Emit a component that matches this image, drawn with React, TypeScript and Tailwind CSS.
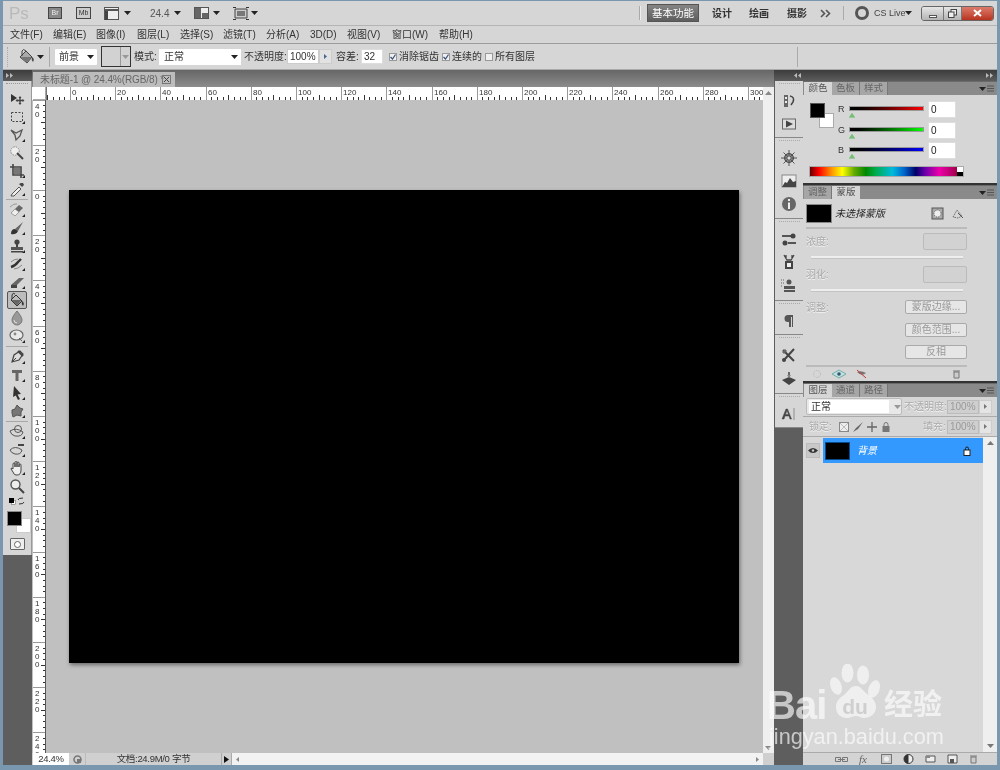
import React from "react";

const FONT = "font-['Liberation_Sans','Noto_Sans_CJK_SC',sans-serif]";

function Ic({ w = 16, h = 16, children }: { w?: number; h?: number; children: React.ReactNode }) {
  return (
    <svg width={w} height={h} viewBox={`0 0 ${w} ${h}`} className="block shrink-0">
      {children}
    </svg>
  );
}

function Caret({ c = "#222" }: { c?: string }) {
  return (
    <svg width="7" height="4" viewBox="0 0 7 4" className="block shrink-0">
      <path d="M0 0h7L3.5 4z" fill={c} />
    </svg>
  );
}

const corner = <path d="M13 15h3v-3z" fill="#222" />;

const tools: React.ReactNode[][] = [
  [
    <Ic key="a"><path d="M2 3l6 4-6 4z" fill="#333" /><path d="M11 6v7M7.5 9.5h7" stroke="#444" strokeWidth="1.4" /><path d="M11 5l-1.5 2h3zM11 14l-1.5-2h3zM6.5 9.5l2-1.5v3zM15.5 9.5l-2-1.5v3z" fill="#444" /></Ic>,
    <Ic key="b"><rect x="2.5" y="3.5" width="11" height="9" fill="none" stroke="#444" strokeDasharray="2 1.5" />{corner}</Ic>,
    <Ic key="c"><path d="M2 3l5 3 6-3-2 6-4 4-1-5z" fill="none" stroke="#555" strokeWidth="1.3" />{corner}</Ic>,
    <Ic key="d"><circle cx="6" cy="6" r="4.2" fill="#eee" stroke="#888" strokeDasharray="1.5 1" /><path d="M8 8l6 6" stroke="#444" strokeWidth="2" /></Ic>,
    <Ic key="e"><path d="M4 1v11h11M1 4h11v11" fill="none" stroke="#444" strokeWidth="1.6" /><rect x="5" y="5" width="6" height="6" fill="#777" />{corner}</Ic>,
    <Ic key="f"><path d="M3 13l7-7 2 2-7 7-3 0z" fill="#eee" stroke="#555" /><path d="M10 3l3 3 2-2-1-2-2 0z" fill="#444" />{corner}</Ic>,
  ],
  [
    <Ic key="a"><path d="M2 11l8-8 4 3-8 8z" fill="#666" /><path d="M2 11l4-4 4 3-4 4z" fill="#eee" stroke="#777" strokeWidth=".5" /><path d="M1 5q4-4 7-3" stroke="#999" fill="none" />{corner}</Ic>,
    <Ic key="b"><path d="M6 9l8-7-5 9z" fill="#666" /><path d="M2 14q0-5 4-5l3 2q-2 4-7 3z" fill="#333" />{corner}</Ic>,
    <Ic key="c"><circle cx="8" cy="4" r="2.6" fill="#444" /><path d="M7 6h2v3H7z" fill="#444" /><path d="M2 9h12v3H2z" fill="#555" /><path d="M2 13h12v1.5H2z" fill="#444" />{corner}</Ic>,
    <Ic key="d"><path d="M2 11q4-1 7-5l3-3" stroke="#333" strokeWidth="2.4" fill="none" /><path d="M2 6q3-3 7-3M5 13q4 0 8-4" stroke="#888" fill="none" />{corner}</Ic>,
    <Ic key="e"><path d="M2 11l8-7h5l-7 7z" fill="#666" /><path d="M2 11h6v3H2z" fill="#444" />{corner}</Ic>,
    <Ic key="f"><path d="M2 8l5-5 6 6-5 5z" fill="#bbb" stroke="#333" /><path d="M6 2q-2-2-3 1v4" stroke="#333" fill="none" /><path d="M13 9q3 2 1 5-2-2-1-5z" fill="#333" /><path d="M2.500 8h10l-4.500 5.500z" fill="#666" /></Ic>,
    <Ic key="g"><path d="M8 1q5 6 5 9a5 5 0 01-10 0q0-3 5-9z" fill="#999" stroke="#777" /><path d="M5 10q0 3 3 3" stroke="#ddd" fill="none" /></Ic>,
    <Ic key="h"><ellipse cx="7.5" cy="7" rx="6.5" ry="5" fill="#e8e8e8" stroke="#666" strokeWidth="1.2" /><circle cx="6" cy="6" r="1.4" fill="#888" /><path d="M10 10l3 3" stroke="#666" />{corner}</Ic>,
  ],
  [
    <Ic key="a"><path d="M3 13l2-7 6-4 3 3-4 6z" fill="#ddd" stroke="#444" strokeWidth="1.2" /><path d="M3 13l4-4" stroke="#444" /><path d="M9 2l5 5" stroke="#444" strokeWidth="2" />{corner}</Ic>,
    <Ic key="b"><path d="M3 3h10v3H9.500v8h-3V6H3z" fill="#666" />{corner}</Ic>,
    <Ic key="c"><path d="M5 1l7 8-3.500.5L11 14l-2 1-2.200-4.500L4 12z" fill="#333" />{corner}</Ic>,
    <Ic key="d"><path d="M3 7l3-1 2-4 3 3 3 1-2 3 0 4-4-1-4 2-1-4z" fill="#777" stroke="#555" />{corner}</Ic>,
  ],
  [
    <Ic key="a"><circle cx="9" cy="5" r="3.500" fill="#ddd" stroke="#555" /><path d="M1 7q6-4 13 1-1 5-8 4-4-1-5-5z" fill="none" stroke="#555" />{corner}</Ic>,
    <Ic key="b"><path d="M1 8q5-5 12 0-1 5-7 4-4-1-5-4z" fill="none" stroke="#555" /><path d="M9 3h6" stroke="#444" strokeWidth="2" />{corner}</Ic>,
    <Ic key="c"><path d="M4 9V4a1 1 0 012 0v3V2.500a1 1 0 012 0V7V3a1 1 0 012 0v4V5a1 1 0 012 0v5q0 5-4 5H7q-2 0-3-3L2 9q0-2 2 0z" fill="#eee" stroke="#444" />{corner}</Ic>,
    <Ic key="d"><circle cx="6.500" cy="6.500" r="4.500" fill="#eee" stroke="#555" strokeWidth="1.400" /><path d="M10 10l5 5" stroke="#444" strokeWidth="2" /></Ic>,
  ],
];

function ToolBox() {
  return (
    <div className="bg-[#d6d6d6] flex flex-col items-center border-r border-[#999] pb-[5px]">
      <div className="h-[9px] w-full flex justify-center pt-[2px]">
        <div className="w-[22px] h-[3px] border-t border-dotted border-[#999]" />
      </div>
      {tools.map((g, i) => (
        <React.Fragment key={i}>
          {i > 0 && (
            <div className="h-[3px] w-full flex items-center justify-center">
              <div className="w-[22px] h-px bg-[#a8a8a8]" />
            </div>
          )}
          {g.map((t, j) => (
            <div
              key={j}
              className={
                i === 1 && j === 5
                  ? "h-[18px] w-[20px] flex items-center justify-center rounded-[2px] border border-[#555] bg-[#bdbdbd]"
                  : "h-[18px] w-[20px] flex items-center justify-center"
              }
            >
              {t}
            </div>
          ))}
        </React.Fragment>
      ))}
      <div className="h-[12px] w-full flex items-center justify-between px-[6px]">
        <Ic w={7} h={7}><rect x="2.500" y="2.500" width="4" height="4" fill="#fff" stroke="#555" strokeWidth=".5" /><rect x="0" y="0" width="5" height="5" fill="#000" /></Ic>
        <Ic w={8} h={8}><path d="M1 3q0-2 5-2M7 5q0 2-5 2" stroke="#333" fill="none" /></Ic>
      </div>
      <div className="relative w-[24px] h-[27px] mt-[4px]">
        <div className="absolute left-[11px] top-[7px] w-[15px] h-[15px] bg-white border border-[#ccc]" />
        <div className="absolute left-[2px] top-0 w-[15px] h-[15px] bg-black border border-[#888]" />
      </div>
      <div className="w-[15px] h-[12px] bg-[#eee] border border-[#666] rounded-[1px] flex items-center justify-center">
        <div className="w-[7px] h-[7px] rounded-full border border-[#666] bg-white" />
      </div>
    </div>
  );
}

function HRuler() {
  const majors = Array.from({ length: 16 }, (_, i) => i);
  const ticks: React.ReactNode[] = [];
  for (let k = -5; k < 130; k++) {
    const x = 24 + k * 5.65;
    if (x < 0 || x > 717) continue;
    const mid = ((k % 8) + 8) % 8 === 4;
    ticks.push(<path key={k} d={`M${Math.round(x) + 0.5} ${mid ? 8 : 10}V13`} stroke="#333" strokeWidth="1" />);
  }
  return (
    <svg width="717" height="13" className="block shrink-0">
      <rect width="717" height="13" fill="#fff" />
      {ticks}
      {majors.map((i) => {
        const x = Math.round(24 + i * 45.2) + 0.5;
        return (
          <g key={i}>
            <path d={`M${x} 0V13`} stroke="#999" />
            <text x={x + 1.5} y="8" fontSize="8" fill="#333" fontFamily="Liberation Sans">{i * 20}</text>
          </g>
        );
      })}
      <path d="M0.500 0V13" stroke="#777" />
    </svg>
  );
}

function VRuler() {
  const labels = ["40", "20", "0", "20", "40", "60", "80", "100", "120", "140", "160", "180", "200", "220", "240"];
  const ticks: React.ReactNode[] = [];
  for (let k = -16; k < 100; k++) {
    const y = 90 + k * 5.65;
    if (y < 0 || y > 653) continue;
    const mid = ((k % 8) + 8) % 8 === 4;
    ticks.push(<path key={k} d={`M${mid ? 8 : 10} ${Math.round(y) + 0.5}H13`} stroke="#333" />);
  }
  return (
    <svg width="13" height="653" className="block shrink-0">
      <rect width="13" height="653" fill="#fff" />
      {ticks}
      {labels.map((l, i) => {
        const y = Math.round(90 + (i - 2) * 45.2);
        return (
          <g key={i}>
            <path d={`M0 ${y + 0.5}H13`} stroke="#999" />
            {l.split("").map((c, j) => (
              <text key={j} x="2" y={y + 9 + j * 8} fontSize="8" fill="#333" fontFamily="Liberation Sans">{c}</text>
            ))}
          </g>
        );
      })}
      <path d="M12.500 0V653" stroke="#555" />
    </svg>
  );
}

function Tabs({ items, active = 0 }: { items: string[]; active?: number }) {
  return (
    <div className="h-[14px] bg-[#8a8a8a] flex items-stretch border-t border-[#6a6a6a] relative shrink-0">
      <div className="w-px" />
      {items.map((t, i) => (
        <div
          key={t}
          className={
            i === active
              ? "w-[28px] flex items-center justify-center text-[9.500px] text-[#555] bg-[#d6d6d6]"
              : "w-[28px] flex items-center justify-center text-[9.500px] text-[#666] bg-[#a6a6a6] border-r border-[#777]"
          }
        >
          {t}
        </div>
      ))}
      <div className="ml-auto mr-[3px] flex items-center gap-px">
        <Caret c="#222" />
        <Ic w={7} h={7}><path d="M0 1h7M0 3.500h7M0 6h7" stroke="#555" /></Ic>
      </div>
    </div>
  );
}

function ColorRow({ l, g }: { l: string; g: string }) {
  return (
    <div className="h-[20.500px] flex items-start">
      <span className="w-[11px] text-[9px] leading-[16px] text-[#333]">{l}</span>
      <div className="w-[75px] mt-[5px] relative h-[12px]">
        <div className={`h-[5px] border border-[#999] ${g}`} />
        <div className="absolute left-[-1px] top-[6px]">
          <Ic w={8} h={6}><path d="M4 0l4 6H0z" fill="#7dbb7d" stroke="#eee" strokeWidth=".5" /></Ic>
        </div>
      </div>
      <div className="ml-[4px] w-[28px] h-[17px] bg-white border border-[#ddd] text-[10px] leading-[15px] pl-[2px] text-[#222]">0</div>
    </div>
  );
}

function MiniBtn({ label }: { label: string }) {
  return (
    <div className="w-[62px] h-[14px] rounded-[2px] border border-[#aaa] bg-[#e6e6e6] text-[10px] leading-[12px] text-center text-[#999]">
      {label}
    </div>
  );
}

function ColorPanel() {
  return (
    <div className="h-[102px] shrink-0 flex flex-col">
      <Tabs items={["颜色", "色板", "样式"]} />
      <div className="flex-1 bg-[#d6d6d6] pt-[6px] pl-[6px] flex flex-col">
        <div className="flex h-[65px]">
          <div className="relative w-[29px] h-[28px] mt-[2px]">
            <div className="absolute left-[10px] top-[10px] w-[15px] h-[15px] bg-white border border-[#aaa]" />
            <div className="absolute left-px top-0 w-[15px] h-[15px] bg-black border border-[#555]" />
          </div>
          <div className="flex flex-col">
            <ColorRow l="R" g="bg-gradient-to-r from-black to-[#ff0000]" />
            <ColorRow l="G" g="bg-gradient-to-r from-black to-[#00ff00]" />
            <ColorRow l="B" g="bg-gradient-to-r from-black to-[#0000ff]" />
          </div>
        </div>
        <div className="w-[155px] h-[11px] flex border border-[#aaa]">
          <div className="flex-1 bg-[linear-gradient(90deg,#600,#f00_6%,#f90_15%,#ff0_22%,#6a0_30%,#080_38%,#0a4_44%,#0bd_56%,#06c_64%,#006_72%,#60a_78%,#e0a_88%,#a0004a)]" />
          <div className="w-[6px] flex flex-col">
            <div className="flex-1 bg-white" />
            <div className="flex-1 bg-black" />
          </div>
        </div>
      </div>
    </div>
  );
}

const dis = "text-[10px] text-[#aaa] [text-shadow:0_1px_0_#f4f4f4]";

function MaskPanel() {
  return (
    <div className="h-[198px] shrink-0 flex flex-col border-t-[2px] border-[#333]">
      <Tabs items={["调整", "蒙版"]} active={1} />
      <div className="flex-1 bg-[#d6d6d6] px-[3px] flex flex-col">
        <div className="h-[30px] flex items-center border-b-[2px] border-[#bbb] mr-[27px]">
          <div className="w-[26px] h-[19px] bg-black border border-[#888]" />
          <span className="ml-[3px] text-[10px] italic text-[#222]">未选择蒙版</span>
          <div className="ml-auto mr-[7px]">
            <Ic w={13} h={13}><rect x="1" y="1" width="11" height="11" fill="#aaa" stroke="#555" /><circle cx="6.500" cy="6.500" r="3.500" fill="#eee" stroke="#555" strokeDasharray="1 1" /></Ic>
          </div>
          <div className="mr-[3px]">
            <Ic w={13} h={13}><path d="M2 10l4-7 5 6-4 2z" fill="none" stroke="#666" strokeDasharray="1.500 1" /><path d="M7 6l5 5" stroke="#555" /></Ic>
          </div>
        </div>
        <div className={`mt-[3px] h-[18px] flex items-center justify-between mr-[27px] ${dis}`}>
          <span>浓度:</span>
          <div className="w-[44px] h-[17px] border border-[#bbb] rounded-[2px] bg-[#d2d2d2]" />
        </div>
        <div className="mt-[6px] ml-[5px] w-[152px] h-[3px] bg-[#eee] border-b border-[#c4c4c4]" />
        <div className={`mt-[6px] h-[18px] flex items-center justify-between mr-[27px] ${dis}`}>
          <span>羽化:</span>
          <div className="w-[44px] h-[17px] border border-[#bbb] rounded-[2px] bg-[#d2d2d2]" />
        </div>
        <div className="mt-[6px] ml-[5px] w-[152px] h-[3px] bg-[#eee] border-b border-[#c4c4c4]" />
        <div className="mt-[8px] flex justify-between mr-[27px]">
          <span className={dis}>调整:</span>
          <MiniBtn label="蒙版边缘..." />
        </div>
        <div className="mt-[8px] flex justify-end mr-[27px]"><MiniBtn label="颜色范围..." /></div>
        <div className="mt-[8px] flex justify-end mr-[27px]"><MiniBtn label="反相" /></div>
        <div className="mt-[6px] mr-[27px] h-[2px] bg-[#bbb]" />
        <div className="h-[12px] mt-[1px] flex items-center mr-[33px] pl-[6px] gap-[10px]">
          <Ic w={10} h={10}><circle cx="5" cy="5" r="3.500" fill="none" stroke="#bbb" strokeDasharray="1.500 1" /></Ic>
          <Ic w={14} h={10}><path d="M0 5l7-4 7 4-7 4z" fill="#bfe3dc" stroke="#7aa" /><circle cx="7" cy="5" r="1.800" fill="#357" /></Ic>
          <Ic w={11} h={10}><path d="M1 3q4-2 9 1-4 4-9-1z" fill="#777" /><path d="M1 1l9 8" stroke="#c33" /></Ic>
          <div className="ml-auto">
            <Ic w={9} h={10}><path d="M1 2h7M2 3h5v6H2z" fill="#ccc" stroke="#777" /></Ic>
          </div>
        </div>
      </div>
    </div>
  );
}

function LayersPanel() {
  return (
    <div className="flex-1 flex flex-col border-t-[2px] border-[#333] min-h-0">
      <Tabs items={["图层", "通道", "路径"]} />
      <div className="h-[20px] shrink-0 bg-[#d6d6d6] border-b border-[#aaa] flex items-center pl-[3px]">
        <div className="w-[96px] h-[17px] bg-[#e8e8e8] border border-[#bbb] rounded-[2px] flex items-center">
          <div className="w-[80px] h-[13px] ml-[2px] bg-white text-[10px] leading-[13px] pl-[2px] text-[#333]">正常</div>
          <div className="ml-[5px]"><Caret c="#999" /></div>
        </div>
        <span className={`ml-[2px] w-[43px] whitespace-nowrap ${dis}`}>不透明度:</span>
        <div className="w-[32px] h-[14px] bg-[#cfcfcf] border border-[#bbb] text-[10px] leading-[12px] pl-[2px] text-[#999]">100%</div>
        <div className="w-[13px] h-[14px] bg-[#e4e4e4] border border-[#ccc] flex items-center justify-center">
          <Ic w={3} h={5}><path d="M0 0l3 2.500L0 5z" fill="#777" /></Ic>
        </div>
      </div>
      <div className="h-[20px] shrink-0 bg-[#d6d6d6] border-b border-[#aaa] flex items-center pl-[6px]">
        <span className={`w-[30px] ${dis}`}>锁定:</span>
        <div className="flex items-center gap-[4px] w-[84px]">
          <Ic w={10} h={10}><rect x=".5" y=".5" width="9" height="9" fill="#eee" stroke="#888" /><path d="M1 1l8 8M9 1L1 9" stroke="#bbb" /></Ic>
          <Ic w={10} h={10}><path d="M0 10l3-4 7-6-5 7z" fill="#666" /></Ic>
          <Ic w={10} h={10}><path d="M5 0v10M0 5h10" stroke="#666" strokeWidth="1.300" /></Ic>
          <Ic w={10} h={10}><rect x="1.500" y="4" width="7" height="6" fill="#777" /><path d="M3 4V2.500a2 2 0 014 0V4" fill="none" stroke="#777" /></Ic>
        </div>
        <span className={`w-[24px] ${dis}`}>填充:</span>
        <div className="w-[32px] h-[14px] bg-[#cfcfcf] border border-[#bbb] text-[10px] leading-[12px] pl-[2px] text-[#999]">100%</div>
        <div className="w-[13px] h-[14px] bg-[#e4e4e4] border border-[#ccc] flex items-center justify-center">
          <Ic w={3} h={5}><path d="M0 0l3 2.500L0 5z" fill="#777" /></Ic>
        </div>
      </div>
      <div className="flex-1 flex bg-[#d8d8d8] min-h-0">
        <div className="flex-1 pt-px">
          <div className="h-[25px] flex">
            <div className="w-[20px] flex items-center justify-center">
              <div className="w-[14px] h-[15px] bg-[#c8c8c8] border border-[#bbb] flex items-center justify-center">
                <Ic w={10} h={7}><path d="M0 3.500q5-5 10 0-5 5-10 0z" fill="#333" /><circle cx="5" cy="3.500" r="1.200" fill="#ccc" /></Ic>
              </div>
            </div>
            <div className="flex-1 bg-[#3399ff] flex items-center pl-[2px]">
              <div className="w-[25px] h-[18px] bg-black border border-[#0a4a8a]" />
              <span className="ml-[7px] text-[10px] italic text-white">背景</span>
              <div className="ml-auto mr-[12px]">
                <Ic w={8} h={10}><rect x="1" y="4" width="6" height="5.500" fill="#fff" stroke="#222" /><path d="M2.500 4V2.500a1.500 1.500 0 013 0V4" fill="none" stroke="#222" /></Ic>
              </div>
            </div>
          </div>
        </div>
        <div className="w-[14px] bg-[#efefef] flex flex-col items-center justify-between py-[4px]">
          <Ic w={7} h={4}><path d="M3.500 0L7 4H0z" fill="#777" /></Ic>
          <Ic w={7} h={4}><path d="M0 0h7L3.500 4z" fill="#777" /></Ic>
        </div>
      </div>
      <div className="h-[13px] shrink-0 bg-[#d4d4d4] border-t border-[#aaa] flex items-center justify-end pr-[19px] gap-[11px]">
        <Ic w={13} h={7}><path d="M.5 1.500h5v4h-5zM7.500 1.500h5v4h-5zM3 3.500h7" fill="none" stroke="#777" /></Ic>
        <span className="w-[11px] text-[11px] leading-[10px] italic text-[#666] font-['Liberation_Serif',serif]">fx</span>
        <Ic w={11} h={10}><rect x=".5" y=".5" width="10" height="9" fill="#ccc" stroke="#777" /><circle cx="5.500" cy="5" r="2.500" fill="#eee" /></Ic>
        <Ic w={11} h={10}><circle cx="5.500" cy="5" r="4.500" fill="#eee" stroke="#333" /><path d="M5.500 .5a4.500 4.500 0 000 9z" fill="#333" /></Ic>
        <Ic w={11} h={10}><path d="M1 2h9v6H1z" fill="#eee" stroke="#555" /><path d="M1 2h4v2H1z" fill="#888" /></Ic>
        <Ic w={11} h={10}><path d="M1 1h9v8H1z" fill="#eee" stroke="#555" /><path d="M3 5h4v4H3z" fill="#555" /></Ic>
        <Ic w={9} h={10}><path d="M1 2h7M2 3h5v6H2z" fill="#ccc" stroke="#777" /></Ic>
      </div>
    </div>
  );
}

const dockIcons: React.ReactNode[][] = [
  [
    <Ic key="a"><path d="M3 2h4v12H3z" fill="#666" /><path d="M4 4h2v2H4zM4 8h2v2H4z" fill="#eee" /><path d="M9 3q5 1 3 6l-2 3" stroke="#444" strokeWidth="1.500" fill="none" /></Ic>,
    <Ic key="b"><rect x="1.500" y="3" width="13" height="10" fill="#ddd" stroke="#666" /><path d="M5 4.500l7 3.500-7 3.500z" fill="#444" /></Ic>,
  ],
  [
    <Ic key="a"><circle cx="8" cy="8" r="4.500" fill="#888" stroke="#444" /><path d="M8 0v16M0 8h16M2.500 2.500l11 11M13.500 2.500l-11 11" stroke="#555" /><circle cx="8" cy="8" r="1.500" fill="#ddd" /></Ic>,
    <Ic key="b"><rect x="1" y="2" width="14" height="12" fill="#eee" stroke="#888" /><path d="M1 14l3-5 2 1 3-5 3 4 3-1v6z" fill="#444" /></Ic>,
    <Ic key="c"><circle cx="8" cy="8" r="7" fill="#666" /><path d="M7 3h2v2H7zM7 6.500h2V13H7z" fill="#eee" /></Ic>,
  ],
  [
    <Ic key="a"><path d="M1 4h9v2H1zM7 11h8v2H7z" fill="#555" /><circle cx="12" cy="5" r="2.500" fill="#444" /><circle cx="4" cy="12" r="2.500" fill="#444" /></Ic>,
    <Ic key="b"><path d="M3 1l3 5h4l3-5M5 1v4M11 1v4" stroke="#444" fill="none" strokeWidth="1.300" /><rect x="4" y="7" width="8" height="8" fill="#444" /><rect x="6" y="9" width="4" height="4" fill="#eee" /></Ic>,
    <Ic key="c"><circle cx="8" cy="4" r="2.500" fill="#555" /><path d="M3 8h11v3H3zM3 12h11v2H3z" fill="#555" /><path d="M0 2h3M0 5h3M0 8h2" stroke="#666" strokeDasharray="1 1" /></Ic>,
  ],
  [
    <Ic key="a"><path d="M12 2H7a3.500 3.500 0 000 7h1v5h2V4h1v10h1z" fill="#555" /></Ic>,
  ],
  [
    <Ic key="a"><path d="M2 3l11 11M13 2L3 13" stroke="#444" strokeWidth="2" /><path d="M1 5l3-3 2 2-3 3z" fill="#666" /><circle cx="3" cy="13" r="2" fill="#444" /></Ic>,
    <Ic key="b"><path d="M8 6l7 3-7 5-7-5z" fill="#444" /><path d="M8 1v5" stroke="#444" strokeWidth="1.500" /><path d="M6 4l2 3 2-3z" fill="#888" /></Ic>,
  ],
  [
    <Ic key="a"><path d="M1 13L5 3h1.500l4 10H9L8 10H4l-1 3zM4.500 8.500h3L6 4.500zM13 2v12" stroke="#444" strokeWidth=".5" fill="#444" /></Ic>,
  ],
];

function Dock() {
  const hs = ["h-[57px]", "h-[81px]", "h-[82px]", "h-[34px]", "h-[59px]", "h-[34px]"];
  return (
    <div className="w-[29px] shrink-0 bg-[#5e5e5e] flex flex-col">
      {dockIcons.map((g, i) => (
        <div key={i} className={`${hs[i]} ml-px bg-[#d6d6d6] border-b border-[#888] flex flex-col items-center`}>
          <div className="h-[8px] w-full flex justify-center pt-[2px]">
            <div className="w-[21px] border-t border-dotted border-[#aaa]" />
          </div>
          <div className="flex-1 flex flex-col items-center justify-around pb-[2px]">{g}</div>
        </div>
      ))}
    </div>
  );
}

function TopBar() {
  return (
    <div className="h-[25px] shrink-0 bg-[#d6d6d6] border-b border-[#b4b4b4] flex items-center">
      <span className="ml-[6px] w-[39px] text-[17px] leading-none text-[#b9b9b9] font-['Liberation_Sans',sans-serif]">Ps</span>
      <div className="w-[14px] h-[12px] bg-[#888] border border-[#444] text-[7px] leading-[10px] text-center text-[#eee]">Br</div>
      <div className="ml-[14px] w-[15px] h-[12px] bg-[#ccc] border border-[#444] text-[7px] leading-[10px] text-center text-[#333]">Mb</div>
      <div className="ml-[13px]">
        <Ic w={15} h={13}><rect x=".5" y=".5" width="14" height="12" fill="#eee" stroke="#555" /><path d="M0 3h15" stroke="#555" strokeWidth="2" /><path d="M1 4h3v9H1z" fill="#444" /></Ic>
      </div>
      <div className="ml-[5px]"><Caret /></div>
      <span className="ml-[19px] w-[20px] text-[10px] text-[#555]">24.4</span>
      <div className="ml-[4px]"><Caret /></div>
      <div className="ml-[13px]">
        <Ic w={15} h={12}><rect x=".5" y=".5" width="14" height="11" fill="#eee" stroke="#555" /><path d="M1 1h6v10H1zM8 6h6v5H8z" fill="#666" /></Ic>
      </div>
      <div className="ml-[4px]"><Caret /></div>
      <div className="ml-[13px]">
        <Ic w={16} h={13}><path d="M2 2h12v9H2z" fill="#ccc" stroke="#444" /><rect x="4" y="4" width="8" height="5" fill="#777" /><path d="M0 0h3M13 0h3M0 13h3M13 13h3" stroke="#333" strokeWidth="2" /></Ic>
      </div>
      <div className="ml-[2px]"><Caret /></div>
      <div className="ml-auto flex items-center">
        <div className="w-[2px] h-[14px] bg-[#aaa] border-r border-[#eee]" />
        <div className="ml-[6px] w-[52px] h-[18px] bg-gradient-to-b from-[#858585] to-[#5e5e5e] border border-[#555] text-[10.500px] leading-[16px] text-center text-white">基本功能</div>
        <span className="ml-[13px] w-[37px] text-[10px] text-[#333] font-bold">设计</span>
        <span className="w-[38px] text-[10px] text-[#333] font-bold">绘画</span>
        <span className="w-[33px] text-[10px] text-[#333] font-bold">摄影</span>
        <Ic w={12} h={9}><path d="M1 1l3.500 3.500L1 8M6 1l3.500 3.500L6 8" fill="none" stroke="#555" strokeWidth="1.600" /></Ic>
        <div className="ml-[11px] w-px h-[14px] bg-[#aaa]" />
        <div className="ml-[11px] w-[14px] h-[14px] rounded-full border-[3px] border-[#555] bg-transparent" />
        <span className="ml-[5px] w-[30px] text-[9px] leading-[14px] text-[#444] whitespace-nowrap">CS Live</span>
        <div className="ml-[1px]"><Caret /></div>
        <div className="ml-[9px] mr-[3px] w-[73px] h-[15px] flex rounded-[3px] border border-[#666] overflow-hidden">
          <div className="w-[22px] bg-gradient-to-b from-[#e6e6e6] to-[#b4b4b4] border-r border-[#777] flex items-end justify-center pb-[2px]">
            <div className="w-[8px] h-[3px] bg-[#fff] border border-[#555]" />
          </div>
          <div className="w-[18px] bg-gradient-to-b from-[#e6e6e6] to-[#b4b4b4] border-r border-[#777] flex items-center justify-center">
            <Ic w={9} h={9}><rect x="3" y=".5" width="5.500" height="5.500" fill="#eee" stroke="#444" /><rect x=".5" y="3" width="5.500" height="5.500" fill="#eee" stroke="#444" /></Ic>
          </div>
          <div className="flex-1 bg-gradient-to-b from-[#dc7a6a] to-[#b8321f] flex items-center justify-center">
            <Ic w={9} h={8}><path d="M1 1l7 6M8 1L1 7" stroke="#fff" strokeWidth="2" /></Ic>
          </div>
        </div>
      </div>
    </div>
  );
}

function MenuBar() {
  const items: [string, string][] = [
    ["文件(F)", "w-[43px]"], ["编辑(E)", "w-[43px]"], ["图像(I)", "w-[41px]"], ["图层(L)", "w-[43px]"], ["选择(S)", "w-[43px]"],
    ["滤镜(T)", "w-[43px]"], ["分析(A)", "w-[44px]"], ["3D(D)", "w-[37px]"], ["视图(V)", "w-[45px]"], ["窗口(W)", "w-[47px]"], ["帮助(H)", "w-[44px]"],
  ];
  return (
    <div className="h-[18px] shrink-0 bg-[#d6d6d6] border-b border-[#9c9c9c] flex items-center pl-[7px]">
      {items.map(([t, w]) => (
        <span key={t} className={`${w} text-[10px] text-[#333] whitespace-nowrap`}>{t}</span>
      ))}
    </div>
  );
}

function Check({ on }: { on: boolean }) {
  return (
    <div className="w-[8px] h-[8px] bg-[#f0f0f0] border border-[#999] flex items-center justify-center">
      {on && <Ic w={6} h={6}><path d="M.5 3l2 2 3-4.500" fill="none" stroke="#35507a" strokeWidth="1.200" /></Ic>}
    </div>
  );
}

function OptionsBar() {
  return (
    <div className="h-[26px] shrink-0 bg-[#d6d6d6] border-b border-[#aaa] flex items-center pl-[4px] text-[10px] text-[#333]">
      <div className="w-[3px] h-[20px] border-l border-dotted border-[#aaa]" />
      <div className="ml-[8px]">
        <Ic w={17} h={17}><path d="M2 9l6-6 6 6-5 6z" fill="#aaa" stroke="#444" /><path d="M8 3q-3-3-4 0v5" stroke="#444" fill="none" /><path d="M14 9q3 2 1 5-2-2-1-5z" fill="#444" /><path d="M2.500 9h11l-5 5.500z" fill="#777" /></Ic>
      </div>
      <div className="ml-[2px]"><Caret /></div>
      <div className="ml-[5px] w-px h-[20px] bg-[#aaa]" />
      <div className="ml-[5px] w-[42px] h-[16px] bg-white flex items-center justify-between pl-[4px] pr-[3px] rounded-[1px]">
        <span>前景</span><Caret />
      </div>
      <div className="ml-[4px] w-[30px] h-[21px] border border-[#333] flex bg-[#d2d2d2]">
        <div className="flex-1 border-r border-[#999]" />
        <div className="w-[9px] flex items-center justify-center"><Caret c="#999" /></div>
      </div>
      <span className="ml-[3px] w-[25px]">模式:</span>
      <div className="w-[82px] h-[16px] bg-white flex items-center justify-between pl-[5px] pr-[3px]">
        <span>正常</span><Caret />
      </div>
      <span className="ml-[3px] w-[43px] whitespace-nowrap">不透明度:</span>
      <div className="w-[32px] h-[15px] bg-white border border-[#ccc] text-[10px] leading-[13px] pl-[2px]">100%</div>
      <div className="w-[13px] h-[15px] bg-[#e2e2e2] border border-[#ccc] flex items-center justify-center">
        <Ic w={3} h={5}><path d="M0 0l3 2.500L0 5z" fill="#46688f" /></Ic>
      </div>
      <span className="ml-[4px] w-[25px]">容差:</span>
      <div className="w-[22px] h-[15px] bg-white border border-[#ddd] text-[10px] leading-[13px] pl-[2px]">32</div>
      <div className="ml-[6px]"><Check on /></div>
      <span className="ml-[2px] w-[41px] whitespace-nowrap">消除锯齿</span>
      <div className="ml-[2px]"><Check on /></div>
      <span className="ml-[2px] w-[31px] whitespace-nowrap">连续的</span>
      <div className="ml-[2px]"><Check on={false} /></div>
      <span className="ml-[2px] whitespace-nowrap">所有图层</span>
      <div className="ml-auto mr-[199px] w-px h-[20px] bg-[#aaa]" />
    </div>
  );
}

function Watermark() {
  return (
    <div className={`absolute left-[766px] top-[664px] w-[190px] h-[92px] text-white/65 ${FONT}`}>
      <span className="absolute left-[1px] top-[17px] text-[40px] leading-[48px] font-bold tracking-[-1px] font-['Liberation_Sans',sans-serif]">Bai</span>
      <svg width="60" height="60" viewBox="0 0 60 60" className="absolute left-[60px] top-0">
        <g fill="#fff" fillOpacity=".6">
          <ellipse cx="21.500" cy="9" rx="6" ry="9.500" />
          <ellipse cx="37" cy="11" rx="6" ry="9.500" />
          <ellipse cx="10" cy="22" rx="5.500" ry="9" transform="rotate(-20 10 22)" />
          <ellipse cx="48" cy="25" rx="5.500" ry="9" transform="rotate(20 48 25)" />
          <path d="M30 22c5 0 7 5 11 8 6 4 9 8 9 13 0 7-6 11-12 11-3 0-5-2-8-2s-6 2-9 2c-6 0-11-4-11-11 0-5 3-9 8-12 4-3 6-9 12-9z" />
        </g>
      </svg>
      <span className="absolute left-[74px] top-[31px] w-[30px] text-center text-[21px] leading-[24px] font-bold text-[#cfcfcf] font-['Liberation_Sans',sans-serif]">du</span>
      <span className="absolute left-[118px] top-[24px] text-[29px] leading-[34px] font-bold whitespace-nowrap">经验</span>
      <span className="absolute left-[3px] top-[59px] text-[21.700px] leading-[28px] whitespace-nowrap font-['Liberation_Sans',sans-serif]">jingyan.baidu.com</span>
    </div>
  );
}

export default function App() {
  return (
    <div className={`relative w-[1000px] h-[770px] overflow-hidden bg-[#7a97b0] pt-px px-[3px] pb-[5px] flex flex-col blur-[0.4px] ${FONT}`}>
      <TopBar />
      <MenuBar />
      <OptionsBar />
      <div className="flex-1 flex min-h-0">
        <div className="w-[29px] shrink-0 bg-[#5e5e5e] flex flex-col">
          <div className="h-[11px] bg-gradient-to-b from-[#3c3c3c] to-[#5c5c5c] flex items-center pl-[3px]">
            <Ic w={7} h={5}><path d="M0 0l3 2.500L0 5zM4 0l3 2.500L4 5z" fill="#bbb" /></Ic>
          </div>
          <ToolBox />
        </div>
        <div className="flex-1 flex flex-col min-w-0 bg-[#bfbfbf]">
          <div className="h-[17px] shrink-0 bg-gradient-to-b from-[#666] to-[#8c8c8c] flex items-end pl-px">
            <div className="w-[142px] h-[15px] bg-[#bcbcbc] flex items-center pl-[7px] text-[10px] tracking-[-0.1px] text-[#666] whitespace-nowrap">
              <span className="w-[122px]">未标题-1 @ 24.4%(RGB/8) *</span>
              <div className="w-[9px] h-[9px] border border-[#777] flex items-center justify-center">
                <Ic w={5} h={5}><path d="M0 0l5 5M5 0L0 5" stroke="#444" /></Ic>
              </div>
            </div>
          </div>
          <div className="h-[13px] shrink-0 flex pl-px bg-white">
            <div className="w-[13px] h-[13px] bg-white border-r border-b border-[#aaa]" />
            <HRuler />
            <div className="w-[11px] bg-[#eee] flex justify-center pt-[4px]">
              <Ic w={7} h={4}><path d="M3.500 0L7 4H0z" fill="#888" /></Ic>
            </div>
          </div>
          <div className="flex-1 flex min-h-0 pl-px">
            <VRuler />
            <div className="flex-1 bg-[#c0c0c0] flex items-center justify-center min-w-0 pr-px">
              <div className="w-[670px] h-[473px] bg-black shadow-[1px_2px_4px_rgba(0,0,0,0.45)]" />
            </div>
            <div className="w-[11px] bg-[#efefef] flex items-end justify-center pb-[3px]">
              <Ic w={7} h={4}><path d="M0 0h7L3.500 4z" fill="#888" /></Ic>
            </div>
          </div>
          <div className="h-[12px] shrink-0 flex pl-px bg-[#d0d0d0] text-[9.500px] text-[#333] tracking-[-0.3px]">
            <div className="w-[36px] bg-white text-center leading-[12px]">24.4%</div>
            <div className="w-[16px] flex items-center justify-center">
              <Ic w={9} h={9}><circle cx="4.500" cy="4.500" r="3.500" fill="none" stroke="#777" strokeWidth="1.600" /><rect x="4" y="4" width="4" height="4" fill="#777" /></Ic>
            </div>
            <div className="w-[136px] text-center leading-[12px] border-l border-[#bbb]">文档:24.9M/0 字节</div>
            <div className="w-[11px] flex items-center justify-center border-x border-[#aaa]">
              <Ic w={5} h={7}><path d="M0 0l5 3.500L0 7z" fill="#111" /></Ic>
            </div>
            <div className="flex-1 bg-[#f2f2f2] flex items-center justify-between px-[4px]">
              <Ic w={3} h={5}><path d="M3 0L0 2.500 3 5z" fill="#888" /></Ic>
              <Ic w={3} h={5}><path d="M0 0l3 2.500L0 5z" fill="#888" /></Ic>
            </div>
            <div className="w-[11px] bg-[#cfcfcf]" />
          </div>
        </div>
        <div className="w-[223px] shrink-0 flex flex-col">
          <div className="h-[11px] shrink-0 bg-gradient-to-b from-[#3c3c3c] to-[#5c5c5c] flex items-center justify-between pl-[20px] pr-[4px]">
            <Ic w={7} h={5}><path d="M3 0L0 2.500 3 5zM7 0L4 2.500 7 5z" fill="#bbb" /></Ic>
            <Ic w={7} h={5}><path d="M0 0l3 2.500L0 5zM4 0l3 2.500L4 5z" fill="#bbb" /></Ic>
          </div>
          <div className="flex-1 flex min-h-0">
            <Dock />
            <div className="flex-1 flex flex-col min-w-0">
              <ColorPanel />
              <MaskPanel />
              <LayersPanel />
            </div>
          </div>
        </div>
      </div>
      <Watermark />
    </div>
  );
}
